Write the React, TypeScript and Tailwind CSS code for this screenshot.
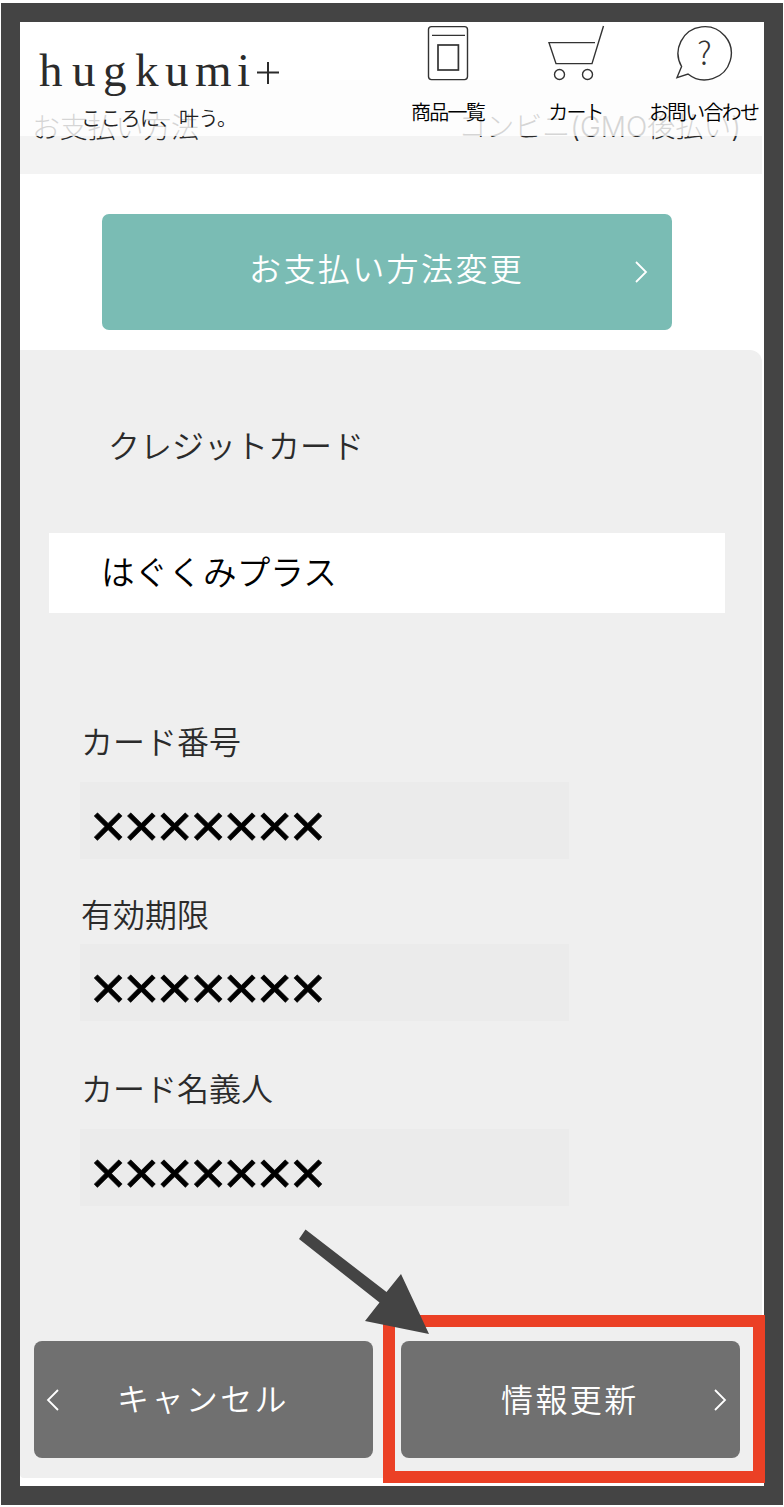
import type { ReactNode } from "react";

const fields = [
  { label: "カード番号", gap: "pt-[109px]", labelHeight: "h-[60px]" },
  { label: "有効期限", gap: "pt-[36px]", labelHeight: "h-[49px]" },
  { label: "カード名義人", gap: "pt-[48px]", labelHeight: "h-[60px]" },
];

function Logo() {
  return (
    <svg
      width="250"
      height="60"
      className="block fill-[#2b2b2b] font-['Liberation_Serif',serif] text-[47px]"
    >
      <text y="44" x="1 34 65 97 127 157 199">
        hugkumi
      </text>
      <path d="M219 30.5h22M230 20v22" stroke="#2b2b2b" strokeWidth="2" />
    </svg>
  );
}

function ProductIcon() {
  return (
    <svg width="60" height="60" fill="none" stroke="#333" strokeWidth="1.4">
      <rect x="10.5" y="4.6" width="39" height="53" rx="3" />
      <path d="M14 13.4h33" />
      <rect x="20" y="23" width="20.4" height="25" strokeWidth="1.7" />
    </svg>
  );
}

function CartIcon() {
  return (
    <svg width="60" height="60" fill="none" stroke="#333" strokeWidth="1.4">
      <path d="M57.5 4 46 41.6H10L3 20.6h46" />
      <circle cx="13.5" cy="52.5" r="5" />
      <circle cx="41.5" cy="52.5" r="5" />
    </svg>
  );
}

function ContactIcon() {
  return (
    <svg width="60" height="60" fill="none" stroke="#333" strokeWidth="1.4">
      <path d="M7.6 44.5 3 55.6 14 52A26.6 26.6 0 1 0 7.6 44.5Z" />
      <text
        x="30.5"
        y="43"
        textAnchor="middle"
        stroke="none"
        fill="#333"
        className="font-['Noto_Sans_CJK_JP',sans-serif] text-[32px] font-light"
      >
        ?
      </text>
    </svg>
  );
}

function NavItem({ label, className, children }: { label: string; className: string; children: ReactNode }) {
  return (
    <a className={`flex flex-col items-center ${className}`}>
      {children}
      <span className="mt-[16px] mr-[1px] whitespace-nowrap text-[20px] leading-[28px] tracking-[-1.8px] text-black">
        {label}
      </span>
    </a>
  );
}

function Chevron({ left }: { left?: boolean }) {
  return (
    <svg
      width="14"
      height="24"
      fill="none"
      stroke="#fff"
      strokeWidth="1.8"
      className={left ? "rotate-180" : ""}
    >
      <path d="M2 2 12 12 2 22" />
    </svg>
  );
}

export default function App() {
  return (
    <div className="h-[1507px] w-[784px] bg-white px-px pt-[3px] font-['Noto_Sans_CJK_JP',sans-serif] font-[350] text-[#2b2b2b]">
      <div className="relative h-[1502px] border-[19px] border-[#444] bg-white">
        <header className="absolute inset-x-0 top-0 z-10 flex h-[114px] bg-white/80">
          <div className="w-[380px] pl-[18px] pt-[20px]">
            <Logo />
            <p className="pl-[43px] text-[20px] leading-[32px] tracking-[-0.3px] text-[#222]">
              こころに、叶う。
            </p>
          </div>
          <nav className="flex">
            <NavItem label="商品一覧" className="-ml-[2px] w-[100px]">
              <ProductIcon />
            </NavItem>
            <NavItem label="カート" className="ml-[28px] w-[100px]">
              <CartIcon />
            </NavItem>
            <NavItem label="お問い合わせ" className="ml-[23px] w-[110px]">
              <ContactIcon />
            </NavItem>
          </nav>
        </header>

        {/* Current payment method */}
        <div className="mt-[58px] mr-[2px] flex h-[94px] justify-between bg-[#f3f3f3] pt-[26px] pl-[12px] pr-[21px] text-[28px] leading-[42px] font-light">
          <span className="-mt-px tracking-[-0.2px]">お支払い方法</span>
          <span className="font-['Inter','Noto_Sans_CJK_JP',sans-serif]">コンビニ(GMO後払い)</span>
        </div>

        <button className="mt-[40px] ml-[82px] flex h-[116px] w-[570px] items-center rounded-[7px] bg-[#7abcb4] pl-[147px] pr-[24px] text-white">
          <span className="-mt-[10px] flex-1 text-left text-[32px] tracking-[2.4px]">お支払い方法変更</span>
          <Chevron />
        </button>

        <section className="mt-[20px] mr-[2px] h-[1128px] rounded-tr-[12px] rounded-b-[4px] bg-[#efefef]">
          <h2 className="pt-[70px] pl-[88px] text-[32px] leading-[48px]">クレジットカード</h2>
          <div className="mt-[65px] ml-[29px] h-20 w-[676px] bg-white pl-[52px] text-[33.6px] leading-[76px] text-black">
            はぐくみプラス
          </div>

          {fields.map((field) => (
            <div key={field.label} className={field.gap}>
              <div className={`pl-[61px] text-[32px] leading-[36px] ${field.labelHeight}`}>{field.label}</div>
              <div className="ml-[60px] h-[77px] w-[489px] bg-[#ebebeb] pl-[10px] font-['Liberation_Sans',sans-serif] text-[62px] leading-[88px] font-normal tracking-[-2.9px] text-black [-webkit-text-stroke:0.7px_black]">
                ×××××××
              </div>
            </div>
          ))}

          <div className="mt-[135px] ml-[14px] flex gap-[28px] text-[32px] tracking-[2.4px] text-white">
            <button className="flex h-[117px] w-[339px] items-center rounded-[8px] bg-[#707070] pl-[12px]">
              <Chevron left />
              <span className="-mt-[5px] ml-[57px]">キャンセル</span>
            </button>
            <button className="flex h-[117px] w-[339px] items-center rounded-[8px] bg-[#707070] pl-[100px] pr-[13px]">
              <span className="-mt-[4px] flex-1 text-left">情報更新</span>
              <Chevron />
            </button>
          </div>
        </section>

        {/* Callout pointing at the update button */}
        <div className="absolute top-[1293px] left-[363px] h-[168px] w-[382px] border-[12px] border-[#eb4025]" />
        <svg width="132" height="106" className="absolute top-[1207px] left-[278px] fill-[#444]">
          <path d="M7.500 0.500 88.500 63 103 45 131 105 67 92 81.500 73.500 1 10Z" />
        </svg>
      </div>
    </div>
  );
}
